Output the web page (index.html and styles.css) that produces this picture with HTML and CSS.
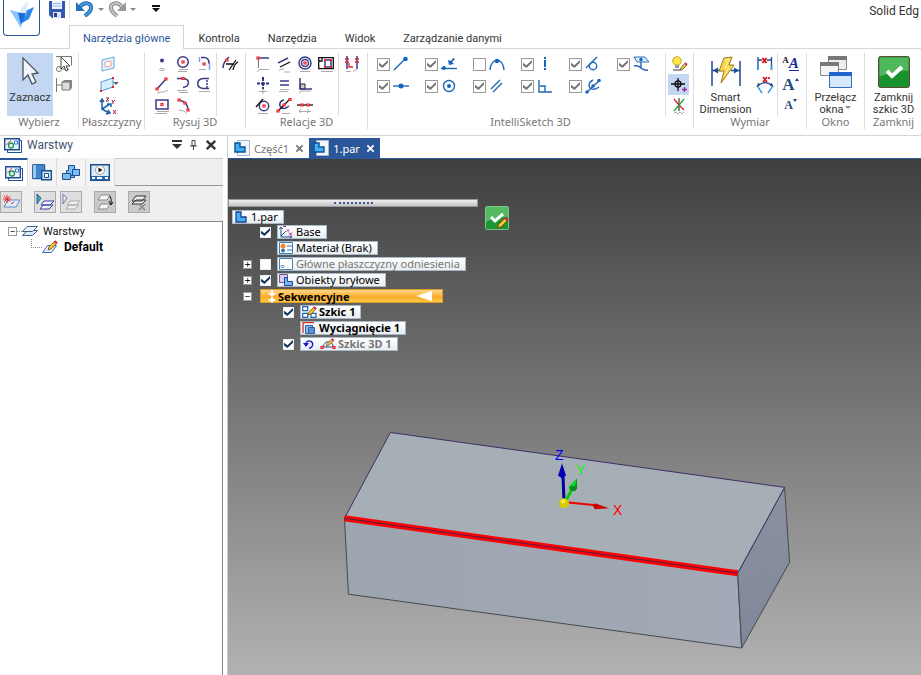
FILE: index.html
```html
<!DOCTYPE html>
<html lang="pl">
<head>
    <meta charset="UTF-8">
    <meta name="viewport" content="width=device-width, initial-scale=1.0">
    <title>Solid Edge</title>
    <link rel="stylesheet" href="styles.css">
</head>
<body>

    <!-- icons used more than once -->
    <svg class="symbols" aria-hidden="true">
        <symbol id="i-part" viewBox="0 0 16 16">
            <path d="M3.5.5h12v15h-12z" fill="#f3f6fa" stroke="#a9b8c8"/>
            <path d="M1 3h5v4h5v5H1z" fill="#3db2f2" stroke="#0f4f96" stroke-width="1.4"/>
        </symbol>
        <symbol id="i-layers" viewBox="0 0 18 16">
            <path d="M3.5 3.5h14v12h-14z" fill="#fff" stroke="#1f4e95"/>
            <path d="M.7 1.7h14.6v11H.7z" fill="#e9f5fc" stroke="#1f4e95" stroke-width="1.4"/>
            <path d="M2.500 8 7 3" stroke="#e04040" fill="none"/>
            <circle cx="7" cy="8.500" r="2.500" fill="none" stroke="#1d9454" stroke-width="1.3"/>
            <path d="M10.500 4h3v3h-3z" fill="#fff" stroke="#3a7bd0"/>
        </symbol>
        <symbol id="i-close" viewBox="0 0 10 10">
            <path d="m1.500 1.500 7 7m0-7-7 7" stroke="currentColor" stroke-width="2" fill="none"/>
        </symbol>
        <symbol id="i-sheets" viewBox="0 0 16 12">
            <path d="M5 5.500h10.500l-5 5H.5z" fill="#dcebfb" stroke="#3f5f88"/>
            <path d="M5 1.500h10.500l-5 5H.5z" fill="#eef6fe" stroke="#3f5f88"/>
        </symbol>
        <symbol id="i-pencil" viewBox="0 0 10 10">
            <path d="m1 9 1-3 5-5 2 2-5 5z" fill="#f2c230" stroke="#5a4300" stroke-width=".7"/>
            <path d="m7 1 2 2" stroke="#e0205a" stroke-width="2"/>
        </symbol>
    </svg>

    <header class="titlebar">
        <button class="app-button" aria-label="Solid Edge">
            <svg width="24" height="28" viewBox="0 0 24 28">
                <path d="m0 9 11 5-2 9z" fill="#9ccdfb"/>
                <path d="M24 6 9 13l3 9 7-4z" fill="#2f86ea"/>
                <path d="M11 7 18 0l-2 14-7 5z" fill="#dcecfb"/>
                <path d="m0 9 13 3-2 15z" fill="#8cc4fa"/>
                <path d="M8 12h8l-5 12z" fill="#1b6fdb"/>
            </svg>
        </button>
        <div class="title-rows">
            <div class="quick-access">
                <button class="qa-save" aria-label="Zapisz">
                    <svg width="16" height="17" viewBox="0 0 16 17">
                        <path d="M0 0h16v17H3l-3-3z" fill="#3557b4"/>
                        <path d="M3 0h10v8H3z" fill="#eef3ff"/>
                        <path d="M4 2.500h8M4 5h8" stroke="#9db2e8"/>
                        <path d="M4 11h8v6H4z" fill="#dce4f8"/>
                        <path d="M5 12h3v4H5z" fill="#2a3f86"/>
                    </svg>
                </button>
                <span class="qa-line"></span>
                <button aria-label="Cofnij">
                    <svg width="18" height="16" viewBox="0 0 18 16">
                        <path d="M4 6C8 0 16 2 15 7c0 4-4 6-6 8" fill="none" stroke="#1c5fa8" stroke-width="4"/>
                        <path d="M4 6C8 0 16 2 15 7c0 4-4 6-6 8" fill="none" stroke="#4ba0e0" stroke-width="2"/>
                        <path d="M0 1v9h9z" fill="#2673bd"/>
                    </svg>
                </button>
                <span class="caret"></span>
                <button aria-label="Ponów">
                    <svg width="18" height="16" viewBox="0 0 18 16">
                        <path d="M14 6C10 0 2 2 3 7c0 4 4 6 6 8" fill="none" stroke="#8b8b8b" stroke-width="4"/>
                        <path d="M14 6C10 0 2 2 3 7c0 4 4 6 6 8" fill="none" stroke="#c5c5c5" stroke-width="2"/>
                        <path d="M18 1v9H9z" fill="#999"/>
                    </svg>
                </button>
                <span class="caret"></span>
                <button class="qa-more" aria-label="Dostosuj">
                    <svg width="8" height="8" viewBox="0 0 8 8"><path d="M0 0h8v2H0zM0 3h8L4 7z" fill="#111"/></svg>
                </button>
                <span class="app-title">Solid Edg</span>
            </div>
            <nav class="tabs">
                <button class="tab active">Narzędzia główne</button>
                <button class="tab">Kontrola</button>
                <button class="tab">Narzędzia</button>
                <button class="tab">Widok</button>
                <button class="tab">Zarządzanie danymi</button>
            </nav>
        </div>
    </header>

    <!-- RIBBON -->
    <div class="ribbon">
        <section class="group g-select">
            <div class="tools">
                <button class="big pressed">
                    <svg width="32" height="32" viewBox="0 0 32 32">
                        <path d="M9 2v22l5-5 4 9 4-2-4-8 6-1z" fill="#f4f7fa" stroke="#4b5560" stroke-width="1.3"/>
                    </svg>
                    Zaznacz
                </button>
                <div class="cells">
                    <button aria-label="Filtr zaznaczania"><svg class="icon" viewBox="0 0 18 18">
                        <path d="M1 1.500h15.500v9" class="st-dark"/><circle cx="4" cy="14" r="2.500" class="st-dark"/><path d="M7 14h7" class="st-dark"/>
                        <path d="M6 2v12l3-3 2 5 2-1-2-4h4z" fill="#fff" stroke="#444"/></svg></button>
                    <button aria-label="Opcje"><svg class="icon" viewBox="0 0 18 18">
                        <path d="M1.500 2v14M2 9h5" class="st-dark"/><path d="M7 6l2-2h8v8l-2 2H7z" fill="#888"/><path d="M7 6h8v8H7z" fill="#ddd" stroke="#777"/></svg></button>
                </div>
            </div>
            <h2>Wybierz</h2>
        </section>

        <section class="group g-planes">
            <div class="tools">
                <div class="cells">
                    <button aria-label="Płaszczyzna wspólna"><svg class="icon" viewBox="0 0 18 18">
                        <path d="m3 5 12-3v11L3 16z" fill="#e6f3fc" stroke="#68a6d8"/><path d="m6 7 6-1v5l-6 1z" fill="#fff" stroke="#f09a9a"/></svg></button>
                    <button aria-label="Płaszczyzna"><svg class="icon wide" viewBox="0 0 22 18">
                        <path d="m4 6 12-4v9L4 15z" fill="#d8edfb" stroke="#4f98d2"/><path d="M15 1h2v2h-2zM15 10h2v2h-2zM3 14h2v2H3z" fill="#ec1c24"/><path d="M16 6h6l-3 3z" fill="#666"/></svg></button>
                    <button aria-label="Układ współrzędnych"><svg class="icon" viewBox="0 0 18 18">
                        <path d="M3 13V3M1 5l2-3 2 3M3 12l8-5M8 7h4v3M3 12l7 4m-3 1 4-1-2-3" stroke="#1d62a8" fill="none" stroke-width="1.500"/>
                        <path d="M7 1h3L7 4h3m3-1 1 2 2-2m-2 2v2m0 6 3 4m0-4-3 4" stroke="#a81e2c" fill="none"/></svg></button>
                </div>
            </div>
            <h2>Płaszczyzny</h2>
        </section>

        <section class="group g-draw">
            <div class="tools">
                <div class="cells cols-3">
                    <button aria-label="Punkt"><svg class="icon" viewBox="0 0 18 18"><circle cx="9" cy="5.500" r="2" fill="#3b3b86"/><ellipse cx="9" cy="14.500" rx="2.500" ry="1" class="st-grey"/></svg></button>
                    <button aria-label="Okrąg"><svg class="icon" viewBox="0 0 18 18"><circle cx="9" cy="7" r="5.300" class="st-navy"/><path d="M8 6h2v2H8z" class="node"/><path d="M5 14.500h9M4 16.500h9" class="st-grey"/></svg></button>
                    <button aria-label="Zaokrąglenie"><svg class="icon" viewBox="0 0 18 18"><path d="M4.500 2v5M14.500 8v7" stroke="#8a9cf0" stroke-width="1.500"/><path d="M6 2.500h3q5 0 5 6" class="st-navy"/><path d="M8 8h2v2H8z" class="node"/><path d="M4 14.500h7" class="st-grey"/></svg></button>
                    <button aria-label="Linia"><svg class="icon" viewBox="0 0 18 18"><path d="m4 13 9-10" class="st-navy"/><path d="M3 12h2v2H3zM12 2h2v2h-2z" class="node"/><path d="m4 17 4-1h3l4-2" class="st-grey"/></svg></button>
                    <button aria-label="Łuk styczny"><svg class="icon" viewBox="0 0 18 18"><path d="M3 2.500h7c6 1 6 8-1 9" class="st-navy"/><path d="M8 1.500h2v2H8z" class="node"/><path d="M3 14.500h10M5 16.500h9" class="st-grey"/></svg></button>
                    <button aria-label="Krzywa"><svg class="icon" viewBox="0 0 18 18"><path d="M14 2.500H8c-7 1-7 9 0 10h6" class="st-navy"/><path d="M12 4v8" class="st-navy dotted"/><path d="M4 15.500h11" class="st-grey"/></svg></button>
                    <button aria-label="Prostokąt"><svg class="icon" viewBox="0 0 18 18"><path d="M3 3h12v9H3z" class="st-navy"/><path d="M8 6.500h2v2H8z" class="node"/><path d="M4 14.500h12M2 16.500h12" class="st-grey"/></svg></button>
                    <button aria-label="Łuk"><svg class="icon" viewBox="0 0 18 18"><path d="M5 3q9 2 9 10" class="st-navy"/><path d="M4 2h2v2H4zM10 5h2v2h-2zM13 12h2v2h-2z" class="node"/><path d="m5 13 5 1 3 3" class="st-grey"/></svg></button>
                </div>
                <span class="sep"></span>
                <div class="cells">
                    <button aria-label="Podziel"><svg class="icon" viewBox="0 0 18 18"><path d="M2 13q0-6 6-11" class="st-navy"/><path d="m8 15 7-10M12 15q1-6 5-8M5 9h8" class="st-black"/><path d="M5 4h2v2H5z" class="node"/></svg></button>
                </div>
            </div>
            <h2>Rysuj 3D</h2>
        </section>

        <section class="group g-relate">
            <div class="tools">
                <div class="cells cols-4">
                    <button aria-label="Połącz"><svg class="icon" viewBox="0 0 18 18"><path d="M5 3h10" class="st-navy"/><path d="M4.500 4v9" class="st-dark"/><path d="M3 2h2v2H3z" class="node"/><path d="M6 14.500h9M3 17l3-3" class="st-grey"/></svg></button>
                    <button aria-label="Równoległość"><svg class="icon" viewBox="0 0 18 18"><path d="m3 8 10-5" class="st-navy"/><path d="m5 12 10-5" class="st-black"/><path d="m4 15 5-1m0 3h6" class="st-grey"/></svg></button>
                    <button aria-label="Koncentryczność"><svg class="icon" viewBox="0 0 18 18"><circle cx="9" cy="8" r="6" class="st-navy"/><circle cx="9" cy="8" r="3.500" class="st-navy"/><path d="M8 7h2v2H8z" class="node"/><path d="M4 16.500h10" class="st-grey"/></svg></button>
                    <button aria-label="Blokuj"><svg class="icon" viewBox="0 0 18 18"><path d="M1.700 2.700h14.600v11H1.700z" class="st-black"/><path d="M2 6h3V3" class="st-black"/><path d="M8 5h6v7H8z" class="st-navy"/><path d="M7 4h2v2H7zm6 0h2v2h-2zM7 11h2v2H7zm6 0h2v2h-2z" fill="#ec1c24"/><path d="M4 16.500h12" class="st-grey"/></svg></button>
                    <button aria-label="Środek"><svg class="icon" viewBox="0 0 18 18"><path d="M9 1v4m0 1v4m0 1v2M3 7.500h3m1 0h4m1 0h3" stroke="#33337f" stroke-width="2"/><path d="M5 15.500h8M9 13v5" class="st-grey"/></svg></button>
                    <button aria-label="Równość"><svg class="icon" viewBox="0 0 18 18"><path d="M5 5h9M5 9h9" class="st-navy"/><path d="M5 13.500h9M4 15.500h9" class="st-grey"/></svg></button>
                    <button aria-label="Prostopadłość"><svg class="icon" viewBox="0 0 18 18"><path d="M4 8h5v5H4z" fill="#ccc" stroke="#222"/><path d="M4 2v11h12" class="st-navy"/><path d="M3 17l2-2h10" class="st-grey"/></svg></button>
                    <span></span>
                    <button aria-label="Styczność"><svg class="icon" viewBox="0 0 18 18"><circle cx="10" cy="9" r="4.700" class="st-navy"/><path d="m2 10 7-8" class="st-black"/><path d="M9 8h2v2H9z" class="node"/><path d="M4 16.500h10" class="st-grey"/></svg></button>
                    <button aria-label="Symetria"><svg class="icon" viewBox="0 0 18 18"><path d="M9 3q-5 1-4 6 3 5 9 0" class="st-navy"/><path d="m3 14 12-12" class="st-black"/><path d="M2 13h2v2H2zM8 7h2v2H8zM14 1.500h2v2h-2z" class="node"/><path d="M7 16.500h8" class="st-grey"/></svg></button>
                    <button aria-label="Współliniowość"><svg class="icon" viewBox="0 0 18 18"><path d="M1 8h16" class="st-black"/><path d="M5 7h2v2H5zm6 0h2v2h-2z" class="node"/><path d="M3 14.500h12M5 12l-2 2 2 2m6-4 2 2-2 2" class="st-grey"/></svg></button>
                </div>
                <span class="sep"></span>
                <div class="cells">
                    <button aria-label="Utrzymaj relacje"><svg class="icon" viewBox="0 0 18 18"><path d="M4 1v13M14 1v13" class="st-navy"/><path d="M2 4h4M2 7h4M12 4h4M12 7h4M6 8v4h4" stroke="#ec1c24" fill="none" stroke-width="1.300"/><path d="M3 16.500h5m2 0 4-2" class="st-grey"/></svg></button>
                </div>
            </div>
            <h2>Relacje 3D</h2>
        </section>

        <section class="group g-intelli">
            <div class="tools">
                <div class="snaps">
                    <label><input type="checkbox" checked aria-label="Punkt końcowy"><svg class="icon" viewBox="0 0 18 18"><path d="M2 15 13 4" class="st-blue"/><circle cx="13.500" cy="4" r="2.300" fill="#1565c0"/></svg></label>
                    <label><input type="checkbox" checked aria-label="Punkt na"><svg class="icon" viewBox="0 0 18 18"><path d="M1 13.500h16" class="st-blue"/><circle cx="4" cy="13" r="2" fill="#1565c0"/><path d="m8 5 1 5 5-1-2-2 3-3-2-1-2 3z" fill="#1565c0"/></svg></label>
                    <label><input type="checkbox" aria-label="Wierzchołek łuku"><svg class="icon" viewBox="0 0 18 18"><path d="M2 15c1-13 13-13 14 0" class="st-blue"/><circle cx="9" cy="6" r="2.200" fill="#1565c0"/></svg></label>
                    <label><input type="checkbox" checked aria-label="Pionowo"><svg class="icon" viewBox="0 0 18 18"><path d="M9 2v14" stroke="#1565c0" stroke-width="2" stroke-dasharray="2 1 7 1"/></svg></label>
                    <label><input type="checkbox" checked aria-label="Styczność"><svg class="icon" viewBox="0 0 18 18"><circle cx="9" cy="11" r="3.700" class="st-blue"/><path d="M2 13 13 2" class="st-blue"/></svg></label>
                    <label><input type="checkbox" checked aria-label="Przebicie"><svg class="icon" viewBox="0 0 18 18"><path d="M2 2h11l4 5H5z" fill="#dcecfb" stroke="#2e6fb5"/><circle cx="9" cy="4.500" r="1.700" fill="#1565c0"/><path d="M9 7v6M2 11q4-1 7 2t7 2" class="st-blue"/></svg></label>
                    <label><input type="checkbox" checked aria-label="Punkt środkowy"><svg class="icon" viewBox="0 0 18 18"><path d="M1 9h16" class="st-blue"/><circle cx="9" cy="9" r="2.500" fill="#1565c0"/></svg></label>
                    <label><input type="checkbox" checked aria-label="Środek okręgu"><svg class="icon" viewBox="0 0 18 18"><circle cx="9" cy="9" r="5.500" class="st-blue"/><circle cx="9" cy="9" r="2" fill="#1565c0"/></svg></label>
                    <label><input type="checkbox" checked aria-label="Równolegle"><svg class="icon" viewBox="0 0 18 18"><path d="M3 12 12 3M5 15 14 6" class="st-blue"/></svg></label>
                    <label><input type="checkbox" checked aria-label="Prostopadle"><svg class="icon" viewBox="0 0 18 18"><path d="M3 3v12h13M4 9h5v6" class="st-blue"/></svg></label>
                    <label><input type="checkbox" checked aria-label="Punkt przecięcia"><svg class="icon" viewBox="0 0 18 18"><path d="M3 15 15 4M9 3q-6 3-3 8 4 3 9-1" class="st-blue"/><circle cx="3" cy="15" r="1.800" fill="#1565c0"/><circle cx="9" cy="9" r="1.800" fill="#1565c0"/><circle cx="15" cy="3.500" r="1.800" fill="#1565c0"/></svg></label>
                </div>
                <span class="sep"></span>
                <div class="cells">
                    <button aria-label="Opcje IntelliSketch"><svg class="icon" viewBox="0 0 18 18"><circle cx="7" cy="6" r="4.300" fill="#ffe94a" stroke="#c9a51e"/><path d="M5 10h4v3H5z" fill="#999"/><path d="m10 14 5-6 2 2-5 5z" fill="#f0c040" stroke="#604a10" stroke-width=".7"/><path d="m15 8 2 2" stroke="#d03070" stroke-width="2"/><path d="M3 15h8" stroke="#333"/></svg></button>
                    <button class="pressed" aria-label="Blokada płaszczyzny"><svg class="icon" viewBox="0 0 18 18"><path d="M8 2v13M1 8h14" class="st-black"/><circle cx="8" cy="8" r="3" class="st-black"/><path d="M14.500 11v5M12 13.500h5" stroke="#a020a0" stroke-width="1.300"/></svg></button>
                    <button aria-label="Orientacja 3D"><svg class="icon" viewBox="0 0 18 18"><path d="M9 1v13" stroke="#111"/><path d="m4 2 5 6 5 5" stroke="#e02020" stroke-width="1.300"/><path d="m14 2-5 6-5 6" stroke="#1aa03a" stroke-width="1.300"/><path d="m4 16 2-1 2 2 2-2 2 2 2-2" class="st-grey"/></svg></button>
                </div>
            </div>
            <h2>IntelliSketch 3D</h2>
        </section>

        <section class="group g-dim">
            <div class="tools">
                <button class="big">
                    <svg width="32" height="32" viewBox="0 0 32 32">
                        <path d="M2 5v25M30 5v25M2 14.500h9M21 14.500h9" stroke="#1c4a94" stroke-width="1.500" fill="none"/>
                        <path d="m3 14.500 5-3v6zM29 14.500l-5-3v6z" fill="#1c4a94"/>
                        <path d="m14 2 8-1-3 8h5L11 27l3-12H9z" fill="#fbd54a" stroke="#9a7a1c"/><path d="m15 4 4-1-4 9h4l-5 8" fill="none" stroke="#fff3b0"/>
                    </svg>
                    Smart Dimension
                </button>
                <div class="cells">
                    <button aria-label="Odległość między"><svg class="icon" viewBox="0 0 18 18"><path d="M2 2v8M15.500 2v8M2 5h4m5 0h4" stroke="#1c4a94" fill="none" stroke-width="1.300"/><path d="M2 10v5M15.500 10v5" stroke="#3a9be8" stroke-width="2"/><path d="m6.500 3 4 5m0-5-4 5" stroke="#e01010" stroke-width="2"/></svg></button>
                    <button aria-label="Kąt między"><svg class="icon" viewBox="0 0 18 18"><path d="M2 10q7-7 14 0M1 11l2-4m14 4-2-4" stroke="#1c4a94" fill="none" stroke-width="1.300"/><path d="m2 11 4 6m10-6-4 6" stroke="#3a9be8" stroke-width="1.500"/><path d="m7 1 4 5m0-5-4 5M13 1v2" stroke="#e01010" stroke-width="1.700"/></svg></button>
                </div>
                <span class="sep"></span>
                <div class="cells letters">
                    <button aria-label="Styl tekstu"><span class="a-small">A</span><span class="a-under">A</span></button>
                    <button aria-label="Powiększ tekst"><span class="a-big">A</span><span class="up"></span></button>
                    <button aria-label="Zmniejsz tekst"><span class="a-mid">A</span><span class="down"></span></button>
                </div>
            </div>
            <h2>Wymiar</h2>
        </section>

        <section class="group g-window">
            <div class="tools">
                <button class="big">
                    <svg width="32" height="32" viewBox="0 0 32 32">
                        <path d="M8.500.5h18v13h-18z" fill="#eee" stroke="#888"/><path d="M8 0h19v4H8z" fill="#777"/>
                        <path d="M.5 6.500h18v13H.5z" fill="#f3f3f3" stroke="#888"/><path d="M0 6h19v4H0z" fill="#777"/>
                        <path d="M9.500 16.500h22v15h-22z" fill="#d5e9fb" stroke="#2e6fc4"/><path d="M9 16h23v4H9z" fill="#1f66cc"/>
                    </svg>
                    <span>Przełącz okna<i class="caret"></i></span>
                </button>
            </div>
            <h2>Okno</h2>
        </section>

        <section class="group g-close">
            <div class="tools">
                <button class="big">
                    <svg width="32" height="32" viewBox="0 0 32 32">
                        <rect x=".5" y=".5" width="31" height="31" rx="2" fill="#17922c" stroke="#5c4a3c"/>
                        <path d="M1.500 1.500h29v13q-15 0-29 6z" fill="#4fb75c"/>
                        <path d="m9 15 5 5 10-9" fill="none" stroke="#fff" stroke-width="4"/>
                    </svg>
                    <span>Zamknij<br>szkic 3D</span>
                </button>
            </div>
            <h2>Zamknij</h2>
        </section>
    </div>

    <main class="workspace">
        <!-- LAYERS PANEL -->
        <aside class="panel">
            <div class="panel-head">
                <svg width="18" height="16"><use href="#i-layers"/></svg>
                <h3>Warstwy</h3>
                <button aria-label="Menu"><svg width="10" height="9" viewBox="0 0 10 9"><path d="M0 0h10v2H0zM0 4h10L5 9z" fill="#333"/></svg></button>
                <button aria-label="Przypnij"><svg width="7" height="10" viewBox="0 0 7 10"><path d="M2 .5h3v5H2zM0 6h7M3.500 6v4" fill="none" stroke="#444"/></svg></button>
                <button aria-label="Zamknij panel"><svg width="12" height="12"><use href="#i-close"/></svg></button>
            </div>
            <div class="panel-tabs">
                <button class="active" aria-label="Warstwy"><svg width="18" height="16"><use href="#i-layers"/></svg></button>
                <button aria-label="Biblioteka"><svg width="20" height="17" viewBox="0 0 20 17"><path d="M.7.7h12v14H.7z" fill="#3f86cf" stroke="#1a4c8e"/><path d="M1 1h3v13H1z" fill="#9cc8ee"/><path d="M9.700 6.700h9.600v9H9.700z" fill="#cfe6f8" stroke="#1a4c8e" stroke-width="1.400"/><path d="M12.500 9.500h4v4h-4z" fill="#fff" stroke="#1a4c8e"/></svg></button>
                <button aria-label="Rodziny"><svg width="18" height="17" viewBox="0 0 18 17"><path d="M6.500 1.500h6v4h5v6h-5v2h-4v2h-8v-6h4v-3h2z" fill="#7dbcf0" stroke="#1a4c8e"/><path d="M12.500 5.500h-2v6m-6-2h4v4m-2-7v-1m2 6h4" fill="none" stroke="#1a4c8e"/></svg></button>
                <button aria-label="Odtwarzanie"><svg width="20" height="17" viewBox="0 0 20 17"><path d="M.7.7h18.600v15.600H.7z" fill="#d8ebf9" stroke="#1a4c8e" stroke-width="1.400"/><circle cx="10" cy="6" r="4.500" fill="#fff" stroke="#999"/><path d="m8.500 3.500 4 2.500-4 2.500z" fill="#111"/><path d="M1 12h18v4H1z" fill="#2a64ae"/><path d="M2 14h3m2 0h5m3 0h3" stroke="#fff" stroke-width="2"/></svg></button>
                <span class="rest"></span>
            </div>
            <div class="panel-tools">
                <button aria-label="Nowa warstwa"><svg class="icon" viewBox="0 0 18 18"><path d="M6 7h12l-4 7H2z" fill="#e1edfa" stroke="#5a8ac4"/><path d="m2 3 6 6M8 3 2 9M5 2v8M1 6h8M9 11l3-2" stroke="#f02828"/></svg></button>
                <button class="gap-12" aria-label="Aktywuj warstwę"><svg class="icon" viewBox="0 0 18 18"><path d="M1 1v10l4-6z" fill="#2fb5a0" stroke="#2a5cae"/><path d="M7 12h10l-4 4H4zM8 8h10l-4 4H5z" fill="#f5f8ff" stroke="#3740a0"/></svg></button>
                <button class="gap-4" aria-label="Pokaż warstwę"><svg class="icon" viewBox="0 0 18 18"><path d="M1 1v10l4-6z" fill="#e0e6f0" stroke="#6a80b0"/><path d="M7 12h10l-4 4H4zM8 8h10l-4 4H5z" fill="#eee" stroke="#aaa"/></svg></button>
                <button class="gap-12 dark" aria-label="Przenieś"><svg class="icon" viewBox="0 0 18 18"><path d="M5 2h9l-3 5H2zM5 11h9l-3 5H2z" fill="#f5f5f5" stroke="#888"/><path d="M14 3q2 3 1 8m-2-3 2 4 2-3" fill="none" stroke="#111"/></svg></button>
                <button class="gap-12 dark" aria-label="Usuń warstwę"><svg class="icon" viewBox="0 0 18 18"><path d="M6 7h10l-4 4H2zM6 3h10l-4 5H2z" fill="#eee" stroke="#333"/><path d="m9 11 6 6m0-6-6 6" stroke="#888" stroke-width="1.500"/></svg></button>
            </div>
            <ul class="layer-tree">
                <li><button class="expander" aria-label="Zwiń">−</button><span class="dots"></span><svg width="16" height="12"><use href="#i-sheets"/></svg><span>Warstwy</span></li>
                <li class="child"><span class="elbow"></span><svg width="17" height="14" viewBox="0 0 17 14"><path d="M5.500 5.500h9l-5 7h-9z" fill="#e6effb" stroke="#3d6ec0"/><use href="#i-pencil" x="5" width="11" height="11"/></svg><strong>Default</strong></li>
            </ul>
        </aside>

        <div class="document">
            <nav class="doc-tabs">
                <div class="doc-tab"><svg width="16" height="16"><use href="#i-part"/></svg><span>Część1</span><button aria-label="Zamknij Część1"><svg width="9" height="9"><use href="#i-close"/></svg></button></div>
                <div class="doc-tab active"><svg width="16" height="16"><use href="#i-part"/></svg><span>1.par</span><button aria-label="Zamknij 1.par"><svg width="9" height="9"><use href="#i-close"/></svg></button></div>
            </nav>

            <div class="viewport">
                <svg class="scene" viewBox="0 0 693 517">
                    <defs>
                        <linearGradient id="front" x1="0" y1="0" x2="1" y2="0"><stop offset="0" stop-color="#9ca5b0"/><stop offset="1" stop-color="#a3a9b6"/></linearGradient>
                        <linearGradient id="side" x1="0" y1="0" x2="0" y2="1"><stop offset="0" stop-color="#8b919f"/><stop offset="1" stop-color="#80879a"/></linearGradient>
                    </defs>
                    <path d="m116 360 394 55 4 75-394-54z" fill="url(#front)" stroke="#444a4c"/>
                    <path d="m510 415 47-86 5 75-48 86z" fill="url(#side)" stroke="#444a4c"/>
                    <path d="m162 274 395 55-47 86-394-55z" fill="#a6aeb6" stroke="#3c2e66"/>
                    <path d="m116 360 394 55" stroke="#f00" stroke-width="6"/>
                    <path d="m116 360 394 55" stroke="#4a2050"/>
                    <!-- coordinate triad -->
                    <path d="m336 344-1-26" stroke="#00009c" stroke-width="3"/><path d="m334 305 4 12-4 3-4-3z" fill="#0000b8"/>
                    <path d="m338 342 7-13" stroke="#0c0" stroke-width="3"/><path d="m349 320-8 9 1 3 5 1 2-3z" fill="#0a8a1a"/><path d="m349 320-8 8h6z" fill="#0d2"/>
                    <path d="m338 344 30 3" stroke="#e00" stroke-width="2"/><path d="m381 350-14-5-2 3 2 3z" fill="#c00"/>
                    <circle cx="336" cy="345" r="5" fill="#d8cc00"/><circle cx="335" cy="343" r="2" fill="#fff24a"/>
                    <text x="327" y="302" fill="#00f">Z</text>
                    <text x="348" y="317" fill="#0f0">Y</text>
                    <text x="385" y="357" fill="#f00">X</text>
                </svg>

                <div class="pathfinder">
                    <div class="grip"><span></span></div>
                    <ul>
                        <li class="root"><span class="node-label"><svg width="14" height="12" viewBox="0 0 14 12"><path d="M2 1h5v5h5v5H2z" fill="#48b0f0" stroke="#1a3f96" stroke-width="1.300"/></svg>1.par</span></li>
                        <li><span class="slot"></span><input type="checkbox" checked aria-label="Base"><span class="node-label"><svg width="14" height="12" viewBox="0 0 14 12"><path d="M2 11V2M0 3l2-2 2 2M2 10l5-5M2 11h10m-1-1 2 1-2 1" stroke="#1d4f98" fill="none"/><path d="M4 .5h3m1 3 2 2m0-2-2 2m2 1 3 3m0-3-3 3" stroke="#a0207c" fill="none"/></svg>Base</span></li>
                        <li><span class="slot"></span><span class="box-space"></span><span class="node-label"><svg width="14" height="12" viewBox="0 0 14 12"><path d="M.5.5h13v11H.5z" fill="#fff" stroke="#2e7fc0"/><path d="M8 4h5M8 8h5" stroke="#2e6fb5"/><circle cx="4" cy="4" r="2.500" fill="#f08a30"/><circle cx="4" cy="8.500" r="2" fill="#4a6a90"/></svg>Materiał (Brak)</span></li>
                        <li><button class="expander" aria-label="Rozwiń">+</button><input type="checkbox" aria-label="Główne płaszczyzny odniesienia"><span class="node-label muted"><svg width="14" height="12" viewBox="0 0 14 12"><path d="M.5.5h13v11H.5z" fill="#fff" stroke="#4a80bc"/><path d="M2 9.500V7.500h3v2z" fill="none" stroke="#7aa4cc"/></svg>Główne płaszczyzny odniesienia</span></li>
                        <li><button class="expander" aria-label="Rozwiń">+</button><input type="checkbox" checked aria-label="Obiekty bryłowe"><span class="node-label"><svg width="14" height="12" viewBox="0 0 14 12"><path d="M.5.5h8v8h-8z" fill="#d6cfe8" stroke="#6d5a94"/><path d="M5.500 3.500h3v4h5v4h-8z" fill="#7db4f0" stroke="#1a4a9c"/></svg>Obiekty bryłowe</span></li>
                        <li><button class="expander" aria-label="Zwiń">−</button><span class="sequence"><svg width="12" height="13" viewBox="0 0 12 13"><path d="M5 0h2v3h3L6 7 2 3h3zM5 7h2v2h3l-4 4-4-4h3z" fill="#fff"/></svg>Sekwencyjne<svg class="marker" width="16" height="10" viewBox="0 0 16 10"><path d="M0 5 16 0v10z" fill="#fff"/></svg></span></li>
                        <li class="deep"><input type="checkbox" checked aria-label="Szkic 1"><span class="node-label bold"><svg width="15" height="12" viewBox="0 0 15 12"><path d="M.7.7h5v4h-5zM.7 7.300h5v4h-5zM9 7.300h5v4H9z" fill="#fff" stroke="#1d62b4" stroke-width="1.200"/><use href="#i-pencil" x="5" width="10" height="10"/></svg>Szkic 1</span></li>
                        <li class="deep"><span class="box-space"></span><span class="node-label bold"><svg width="15" height="12" viewBox="0 0 15 12"><path d="M1 11V.7h11" fill="none" stroke="#e02424" stroke-width="1.300"/><path d="M3.500 3.500h7v8h-7z" fill="#8dbbe8" stroke="#31629c"/><path d="M6.500 5.500h6v6h-6z" fill="#5a94d6" stroke="#31629c"/></svg>Wyciągnięcie 1</span></li>
                        <li class="deep"><input type="checkbox" checked aria-label="Szkic 3D 1"><span class="node-label bold muted"><svg width="34" height="12" viewBox="0 0 34 12"><path d="M4 5a3.500 3.500 0 1 1 3 5" fill="none" stroke="#1a1ad0" stroke-width="1.300"/><path d="M1 5h6L4 9z" fill="#1a1ad0"/><path d="m20 9 4-5h5l3 5z" fill="none" stroke="#1d4f98"/><path d="M19 8.500h2v2h-2zM31 8.500h2v2h-2z" class="node"/><use href="#i-pencil" x="23" width="10" height="9"/></svg>Szkic 3D 1</span></li>
                    </ul>
                </div>

                <button class="accept" aria-label="Akceptuj">
                    <svg width="24" height="24" viewBox="0 0 24 24">
                        <rect x=".5" y=".5" width="23" height="23" rx="1" fill="#1b9632" stroke="#7cc487"/>
                        <path d="M1 1h22v10Q10 11 1 16z" fill="#55bb62"/>
                        <path d="m6 11 4 4 8-7" fill="none" stroke="#fff" stroke-width="3"/>
                        <use href="#i-pencil" x="11" y="10" width="13" height="14"/>
                    </svg>
                </button>
            </div>
        </div>
    </main>

</body>
</html>
```

FILE: styles.css
```css
* {
    box-sizing: border-box;
}

body {
    margin: 0;
    height: 100vh;
    display: flex;
    flex-direction: column;
    overflow: hidden;
    background: #fff;
    color: #333;
    font-family: "Roboto", "Liberation Sans", sans-serif;
    font-size: 11px;
}

button {
    padding: 0;
    border: 0;
    background: none;
    color: inherit;
    font: inherit;
}

svg {
    display: block;
    flex: none;
}

ul {
    list-style: none;
    margin: 0;
    padding: 0;
}

h2,
h3 {
    margin: 0;
    font-weight: normal;
}

.symbols {
    position: absolute;
    width: 0;
    height: 0;
}

.caret {
    display: inline-block;
    border: 3px solid transparent;
    border-top-color: #888;
    border-bottom: 0;
}

/* Title bar */
.titlebar {
    display: flex;
    height: 49px;
    flex: none;
    background: linear-gradient(#d5d5d5, #d5d5d5) bottom / 100% 1px no-repeat;
}

.app-button {
    width: 37px;
    height: 36px;
    margin-left: 3px;
    padding: 0 0 6px 6px;
    border: 1px solid #2b579a;
    border-top: 0;
    border-radius: 0 0 4px 4px;
    flex: none;
}

.title-rows {
    flex: 1;
    display: flex;
    flex-direction: column;
    min-width: 0;
}

.quick-access {
    height: 25px;
    display: flex;
    align-items: center;
    gap: 4px;
    padding: 0 2px 7px 9px;
}

.qa-line {
    width: 1px;
    height: 18px;
    margin-right: 2px;
    background: #ddd;
}

.qa-more {
    margin-left: 12px;
}

.app-title {
    margin-left: auto;
    padding-top: 4px;
    font-size: 12px;
    white-space: nowrap;
}

.tabs {
    display: flex;
    flex: 1;
    padding-left: 29px;
}

.tab {
    padding: 2px 14px 0;
    white-space: nowrap;
}

.tab.active {
    padding: 1px 13px 0;
    border: 1px solid #d5d5d5;
    border-bottom: 0;
    background: #fff;
    color: #2b579a;
}

/* Ribbon */
.ribbon {
    display: flex;
    flex: none;
    height: 87px;
    padding: 4px 0 6px;
    border-bottom: 1px solid #d5d5d5;
    overflow: hidden;
}

.group {
    display: flex;
    flex-direction: column;
    flex: none;
    border-right: 1px solid #dcdcdc;
}

.group h2 {
    color: #777;
    font-family: "Noto Sans", sans-serif;
    font-size: 11px;
    line-height: 12px;
    text-align: center;
    white-space: nowrap;
}

.tools {
    display: flex;
    height: 63px;
}

.g-select { width: 79px; }
.g-planes { width: 66px; }
.g-draw { width: 101px; }
.g-relate { width: 122px; }
.g-intelli { width: 326px; }
.g-dim { width: 113px; }
.g-window { width: 58px; }

.g-close {
    flex: 1;
    min-width: 57px;
    border-right: 0;
}

.g-select .tools { padding-left: 7px; }
.g-planes .tools { padding-left: 18px; }
.g-draw .tools,
.g-relate .tools { padding-left: 6px; }
.g-dim .tools { padding-left: 3px; }

.g-window .tools,
.g-close .tools {
    justify-content: center;
}

.big {
    display: flex;
    flex-direction: column;
    align-items: center;
    gap: 4px;
    padding-top: 3px;
    line-height: 12px;
}

.g-select .big { width: 46px; }
.g-dim .big { width: 57px; }
.g-window .big { width: 50px; }
.g-close .big { width: 50px; }

.big .caret {
    margin: 0 0 4px 2px;
}

.pressed {
    background: #c3d6f2;
}

.cells {
    display: grid;
    grid-template-columns: 21px;
    grid-auto-rows: 21px;
}

.cells.cols-3 { grid-template-columns: repeat(3, 21px); }
.cells.cols-4 { grid-template-columns: repeat(4, 21px); }

.cells button {
    display: flex;
    align-items: center;
    justify-content: center;
}

.sep {
    width: 1px;
    margin: 0 2px;
    background: #dcdcdc;
}

.icon {
    width: 18px;
    height: 18px;
    fill: none;
}

.icon.wide {
    width: 22px;
}

.st-navy { stroke: #3b3b86; stroke-width: 1.5; fill: none; }
.st-grey { stroke: #aaa; fill: none; }
.st-dark { stroke: #777; fill: none; }
.st-black { stroke: #111; stroke-width: 1.3; fill: none; }
.st-blue { stroke: #1f66b8; stroke-width: 1.4; fill: none; }
.node { stroke: #ec1c24; stroke-width: 1.2; fill: #fff; }
.dotted { stroke-dasharray: 2 1; }

/* IntelliSketch check boxes */
.snaps {
    display: grid;
    grid-template-columns: repeat(5, 48px) 33px;
    grid-auto-rows: 22px;
    align-items: center;
    padding-left: 9px;
}

.snaps label {
    display: flex;
    align-items: center;
    gap: 2px;
}

.g-intelli .sep {
    margin-left: auto;
}

.g-intelli .cells {
    margin-right: 4px;
}

input[type="checkbox"] {
    appearance: none;
    display: grid;
    place-items: center;
    width: 13px;
    height: 13px;
    margin: 0;
    border: 1px solid #999;
    background: #fff;
    color: #777;
    flex: none;
}

input[type="checkbox"]:checked::after {
    content: "";
    width: 9px;
    height: 8px;
    background: currentColor;
    clip-path: polygon(0 35%, 38% 65%, 100% 0, 100% 35%, 38% 100%, 0 70%);
}

.letters button {
    font-family: "Liberation Serif", serif;
    font-weight: bold;
    color: #1c4a7c;
}

.a-small { font-size: 9px; padding-bottom: 7px; color: #111; }
.a-under { font-size: 15px; font-style: italic; line-height: 13px; border-bottom: 1px solid #1a2a9c; color: #1a2a9c; }
.a-big { font-size: 17px; }
.a-mid { font-size: 12px; }

.up,
.down {
    border: 2px solid transparent;
    margin-bottom: 11px;
}

.up { border-bottom: 3px solid #1c4a7c; border-top: 0; }
.down { border-top: 3px solid #1c4a7c; border-bottom: 0; }

/* Workspace */
.workspace {
    flex: 1;
    display: flex;
    min-height: 0;
}

.panel {
    width: 228px;
    flex: none;
    display: flex;
    flex-direction: column;
    border-right: 1px solid #ccc;
    padding-right: 4px;
}

.panel-head {
    display: flex;
    align-items: center;
    height: 22px;
    padding: 0 6px 5px 4px;
    gap: 8px;
}

.panel-head h3 {
    flex: 1;
    margin-left: -3px;
    font-size: 12px;
    color: #44546f;
}

.panel-tabs {
    display: flex;
    height: 28px;
    background: #f4f4f4;
}

.panel-tabs button {
    display: flex;
    align-items: center;
    justify-content: center;
    width: 29px;
    border-right: 1px solid #ddd;
}

.panel-tabs .active {
    width: 28px;
    background: #fff;
    border-top: 2px solid #2b579a;
}

.panel-tabs .rest {
    flex: 1;
    background: #efefef;
    border-top: 1px solid #ccc;
    border-bottom: 1px solid #999;
}

.panel-tools {
    display: flex;
    align-items: center;
    height: 35px;
    padding-bottom: 3px;
    background: #efefef;
}

.panel-tools button {
    display: flex;
    align-items: center;
    justify-content: center;
    width: 22px;
    height: 22px;
    border: 1px solid #aaa;
    background: #dedede;
}

.panel-tools .dark { background: #cacaca; }
.panel-tools .gap-12 { margin-left: 12px; }
.panel-tools .gap-4 { margin-left: 4px; }

.layer-tree {
    flex: 1;
    padding: 1px 0 0 8px;
    border: solid #828790;
    border-width: 1px 1px 0 0;
    color: #111;
}

.layer-tree li {
    display: flex;
    align-items: center;
    height: 16px;
}

.layer-tree span:last-child,
.layer-tree strong {
    margin-left: 5px;
}

.layer-tree strong {
    font-size: 12px;
    color: #000;
}

.layer-tree .child {
    padding-left: 23px;
}

.dots {
    width: 5px;
    border-bottom: 1px dotted #888;
}

.elbow {
    width: 11px;
    height: 9px;
    margin-bottom: 8px;
    border: dotted #888;
    border-width: 0 0 1px 1px;
}

.expander {
    display: flex;
    align-items: center;
    justify-content: center;
    width: 9px;
    height: 9px;
    border: 1px solid #999;
    background: #fff;
    color: #111;
    font-size: 10px;
    line-height: 7px;
    flex: none;
}

.document {
    flex: 1;
    min-width: 0;
    display: flex;
    flex-direction: column;
}

.doc-tabs {
    display: flex;
    height: 23px;
    padding: 2px 0 0;
    border-bottom: 1px solid #2b579a;
    font-family: "Noto Sans", sans-serif;
    color: #777;
}

.doc-tab {
    display: flex;
    align-items: center;
    gap: 4px;
    padding: 0 5px 0 6px;
}

.doc-tab button {
    padding-left: 2px;
}

.doc-tab.active {
    padding-left: 4px;
    background: #2b579a;
    color: #fff;
}

.viewport {
    position: relative;
    flex: 1;
    min-height: 0;
    background: linear-gradient(#3f3f3f, #b2b2b2);
}

.scene {
    width: 100%;
    height: 100%;
    fill: none;
}

.scene text {
    font-family: "Liberation Sans", sans-serif;
    font-size: 14px;
}

/* Pathfinder tree floating over the model */
.pathfinder {
    position: absolute;
    left: 0;
    top: 40px;
    width: 250px;
    font-family: "Noto Sans", sans-serif;
    font-size: 11px;
    color: #000;
}

.grip {
    display: flex;
    align-items: center;
    justify-content: center;
    height: 8px;
    border: 1px solid #999;
    background: linear-gradient(#eee, #c4c4c4);
}

.grip span {
    width: 39px;
    border-bottom: 2px dotted #3c5a98;
}

.pathfinder ul {
    padding-top: 2px;
}

.pathfinder li {
    display: flex;
    align-items: center;
    height: 16px;
    padding-left: 15px;
    white-space: nowrap;
}

.pathfinder .root {
    height: 15px;
    padding-left: 4px;
}

.pathfinder .deep {
    padding-left: 55px;
}

.slot,
.pathfinder .expander {
    width: 9px;
    margin-right: 8px;
}

.pathfinder input,
.box-space {
    width: 11px;
    height: 11px;
    margin-right: 6px;
}

.pathfinder input {
    border-color: #e8eef4;
    color: #15335c;
}

.node-label {
    display: flex;
    align-items: center;
    gap: 3px;
    height: 14px;
    padding: 0 5px 0 1px;
    border: 1px solid #a9bac6;
    background: linear-gradient(#fff, #e9edf0);
    line-height: 12px;
}

.muted { color: #777; }

.bold,
.sequence {
    font-weight: bold;
}

.bold {
    gap: 2px;
}

.sequence {
    display: flex;
    align-items: center;
    width: 183px;
    height: 14px;
    padding: 0 10px 0 5px;
    border: 1px solid #e09a28;
    background: linear-gradient(#ffd98a, #fba928 60%, #ffcf4a);
}

.marker {
    margin-left: auto;
}

.accept {
    position: absolute;
    left: 257px;
    top: 47px;
}
```
